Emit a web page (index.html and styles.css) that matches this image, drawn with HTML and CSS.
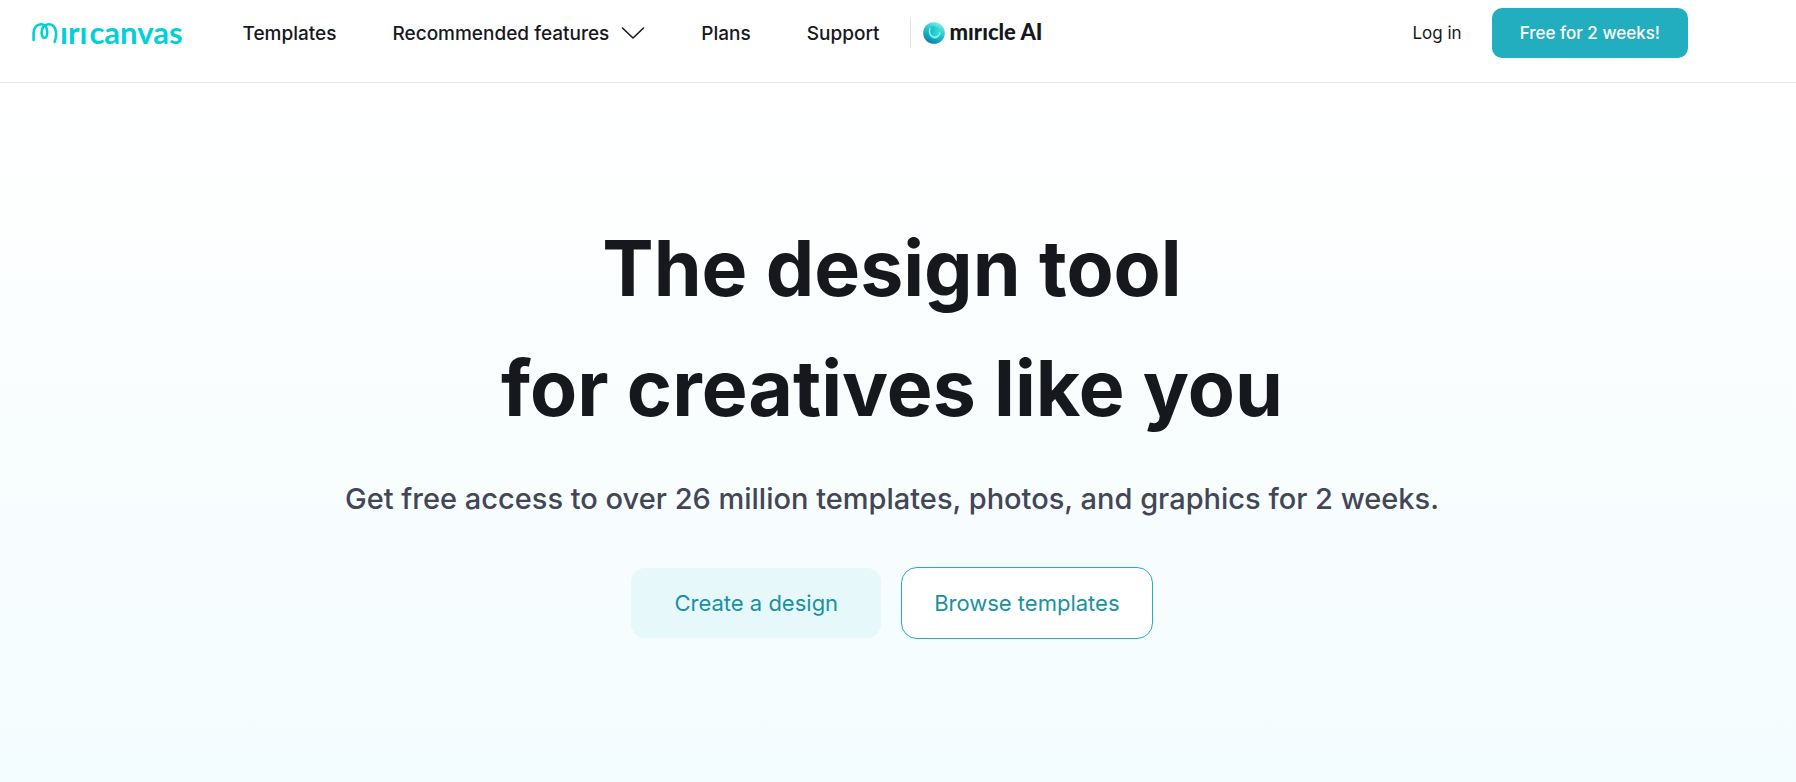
FILE: index.html
```html
<!DOCTYPE html>
<html lang="en">
<head>
    <meta charset="UTF-8">
    <meta name="viewport" content="width=device-width, initial-scale=1.0">
    <title>MiriCanvas</title>
    <link rel="stylesheet" href="styles.css">
</head>
<body>
    <header class="header">
        <a class="logo" href="#" aria-label="MiriCanvas">
            <svg class="logo-mark" width="26" height="22" viewBox="0 0 26 22" fill="none" stroke="currentColor" stroke-width="2.6" stroke-linecap="round">
                <path d="M1.6 18V11C1.6 5.5 5 2.2 9 2.2c4.200 0 6.200 4 6.200 8 0 3.400-1 5.600-2.800 5.600s-2.800-2.400-2.800-5.600C9.600 5.600 12.600 2.200 16.600 2.200c4.600 0 7.600 4 7.600 9.600 0 3-.6 5.600-1.600 8"/>
            </svg>
            <span class="logo-text">ırı</span>
            <span class="logo-text">canvas</span>
        </a>
        <nav class="nav">
            <a href="#">Templates</a>
            <button class="nav-menu" type="button">
                Recommended features
                <svg width="24" height="14" viewBox="0 0 24 14" fill="none" stroke="currentColor" stroke-width="1.6" stroke-linejoin="round" stroke-linecap="round">
                    <path d="M1.5 2L12 12L22.5 2"/>
                </svg>
            </button>
            <a href="#">Plans</a>
            <a href="#">Support</a>
        </nav>
        <a class="miricle" href="#">
            <svg width="22" height="22" viewBox="0 0 22 22">
                <defs>
                    <linearGradient id="orb" x1="0.8" y1="0" x2="0.3" y2="1">
                        <stop offset="0" stop-color="#7cf3e6"/>
                        <stop offset="0.5" stop-color="#22c3cd"/>
                        <stop offset="1" stop-color="#0a7ba6"/>
                    </linearGradient>
                    <linearGradient id="swirl" x1="0" y1="0.2" x2="1" y2="0.8">
                        <stop offset="0" stop-color="#12b0bd"/>
                        <stop offset="1" stop-color="#3fe3dc"/>
                    </linearGradient>
                </defs>
                <circle cx="11" cy="11" r="10.8" fill="url(#orb)"/>
                <ellipse cx="11" cy="10.5" rx="6" ry="6.5" fill="url(#swirl)" transform="rotate(-25 11 10.5)"/>
                <path d="M7 6.500C5.500 10 7 14 10.500 15c3 .8 6-1.200 6.500-4" fill="none" stroke="#8ff5ee" stroke-width="1.4" stroke-linecap="round"/>
            </svg>
            <span>mırıcle AI</span>
        </a>
        <div class="account">
            <a class="login" href="#">Log in</a>
            <button class="trial" type="button">Free for 2 weeks!</button>
        </div>
    </header>

    <main class="hero">
        <h1>The design tool<br>for creatives like you</h1>
        <p>Get free access to over 26 million templates, photos, and graphics for 2 weeks.</p>
        <div class="hero-buttons">
            <button class="btn btn-create" type="button">Create a design</button>
            <button class="btn btn-browse" type="button">Browse templates</button>
        </div>
    </main>
</body>
</html>
```
FILE: styles.css
```css
:root {
  --clr-logo: #00d0d8;
  --clr-primary: #23aec0;
  --clr-primary-dark: #1a91a0;
  --clr-primary-light: #e7f8fb;
  --clr-text: #17181d;
  --clr-text-2: #424657;
  --clr-line: #e6e6e8;
}

*,
::after,
::before {
  margin: 0;
  padding: 0;
  box-sizing: border-box;
}

body {
  display: flex;
  flex-direction: column;
  min-height: 100vh;
  font-family: Inter, "Liberation Sans", sans-serif;
  color: var(--clr-text);
  background: #fff;
}

a {
  color: inherit;
  text-decoration: none;
}

button {
  font: inherit;
  color: inherit;
  background: none;
  border: none;
  cursor: pointer;
}

svg {
  display: block;
  flex: none;
}

/* header */

.header {
  display: flex;
  align-items: center;
  padding: 8px 108px 24px 32px;
  border-bottom: 1px solid var(--clr-line);
  white-space: nowrap;
}

.logo {
  display: flex;
  align-items: center;
  gap: 2px;
  color: var(--clr-logo);
}

.logo-text {
  font-family: Lato, sans-serif;
  font-size: 31px;
  font-weight: 700;
  line-height: 30px;
  padding-bottom: 2px;
}

.nav {
  display: flex;
  align-items: center;
  gap: 56px;
  margin-left: 60px;
  font-size: 19px;
  font-weight: 500;
}

.nav-menu {
  display: flex;
  align-items: center;
  gap: 12px;
}

.miricle {
  display: flex;
  align-items: center;
  gap: 5px;
  height: 30px;
  margin-left: 30px;
  padding-left: 12px;
  border-left: 1px solid var(--clr-line);
  font-family: Lato, sans-serif;
  font-size: 22px;
  font-weight: 900;
  line-height: 24px;
}

.miricle span {
  padding-bottom: 2px;
}

.account {
  display: flex;
  align-items: center;
  gap: 30px;
  margin-left: auto;
  font-size: 17px;
}

.trial {
  height: 50px;
  padding: 0 28px;
  border-radius: 10px;
  background: var(--clr-primary);
  color: #fff;
  font-weight: 500;
}

/* hero */

.hero {
  flex: 1;
  display: flex;
  flex-direction: column;
  align-items: center;
  padding: 125px 12px 120px 0;
  background: linear-gradient(#fff, #f3fcfe);
  text-align: center;
}

.hero h1 {
  font-size: 77px;
  font-weight: 700;
  line-height: 120px;
}

.hero p {
  margin-top: 31px;
  font-size: 29px;
  font-weight: 500;
  line-height: 40px;
  color: var(--clr-text-2);
}

.hero-buttons {
  display: flex;
  align-items: center;
  gap: 20px;
  margin-top: 48px;
}

.btn {
  font-size: 22px;
  font-weight: 400;
  color: var(--clr-primary-dark);
}

.btn-create {
  padding: 0 43px;
  height: 70px;
  border-radius: 14px;
  background: var(--clr-primary-light);
}

.btn-browse {
  padding: 0 32px;
  height: 72px;
  border: 1px solid var(--clr-primary);
  border-radius: 16px;
  background: #fff;
}
```
